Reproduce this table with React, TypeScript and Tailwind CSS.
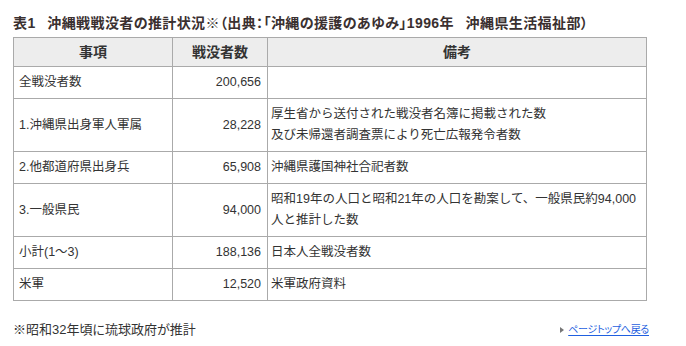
const rows: { label: string; count: string; note: React.ReactNode }[] = [
  { label: "全戦没者数", count: "200,656", note: "" },
  {
    label: "1.沖縄県出身軍人軍属",
    count: "28,228",
    note: (
      <>
        厚生省から送付された戦没者名簿に掲載された数
        <br />
        及び未帰還者調査票により死亡広報発令者数
      </>
    ),
  },
  { label: "2.他都道府県出身兵", count: "65,908", note: "沖縄県護国神社合祀者数" },
  {
    label: "3.一般県民",
    count: "94,000",
    note: (
      <>
        昭和19年の人口と昭和21年の人口を勘案して、一般県民約94,000
        <br />
        人と推計した数
      </>
    ),
  },
  { label: "小計(1～3)", count: "188,136", note: "日本人全戦没者数" },
  { label: "米軍", count: "12,520", note: "米軍政府資料" },
];

export default function App() {
  return (
    <div className="min-h-[346px] bg-white pl-[13px] pt-[13px] text-[#333] font-['Liberation_Sans','Noto_Sans_CJK_JP',sans-serif]">
      <h3 className="mb-[4px] text-[14px] font-bold leading-[20px] tracking-[0.4px] text-[#3a3030] [font-feature-settings:'palt']">
        表1&ensp;&nbsp;沖縄戦戦没者の推計状況※（出典：「沖縄の援護のあゆみ」1996年&ensp;&nbsp;沖縄県生活福祉部）
      </h3>

      <table className="w-[634px] table-fixed border-collapse text-[12.5px]">
        <colgroup>
          <col className="w-[159px]" />
          <col className="w-[95px]" />
          <col />
        </colgroup>
        <thead>
          <tr className="bg-[#ededed]">
            <th className="border border-[#aaa] py-[4px] text-[14px] font-bold leading-[20px]">事項</th>
            <th className="border border-[#aaa] py-[4px] text-[14px] font-bold leading-[20px]">戦没者数</th>
            <th className="border border-[#aaa] py-[4px] text-[14px] font-bold leading-[20px]">備考</th>
          </tr>
        </thead>
        <tbody>
          {rows.map((row) => (
            <tr key={row.label}>
              <td className="border border-[#aaa] px-[5px] py-[5px] align-middle leading-[21px]">{row.label}</td>
              <td className="border border-[#aaa] px-[6px] py-[5px] text-right align-middle leading-[21px]">{row.count}</td>
              <td className="border border-[#aaa] px-[3px] py-[5px] align-middle leading-[21px]">{row.note}</td>
            </tr>
          ))}
        </tbody>
      </table>

      <div className="mt-[19px] flex w-[636px] items-center justify-between">
        <p className="text-[13px] leading-[20px] [font-feature-settings:'palt']">※昭和32年頃に琉球政府が推計</p>
        <a href="#top" className="flex items-center gap-[4px] text-[10px] leading-[20px] tracking-[-0.3px] text-[#1f5fe0] [font-feature-settings:'palt']">
          <span className="h-0 w-0 border-y-[3px] border-l-[4px] border-y-transparent border-l-[#777]" />
          <span className="underline underline-offset-2">ページトップへ戻る</span>
        </a>
      </div>
    </div>
  );
}
